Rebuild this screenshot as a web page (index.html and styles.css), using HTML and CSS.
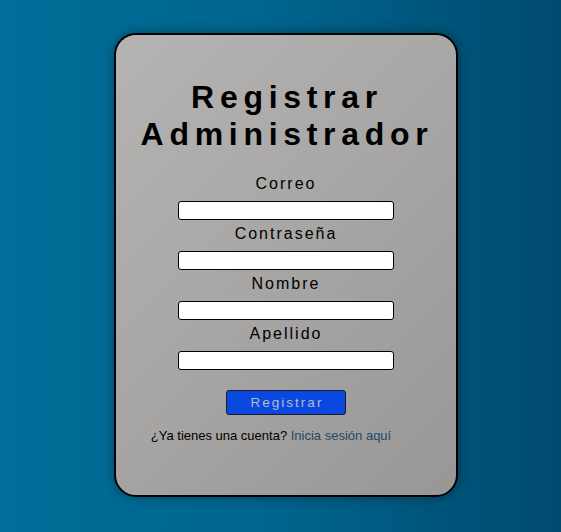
FILE: index.html
```html
<!DOCTYPE html>
<html lang="es">
<head>
<meta charset="utf-8">
<title>Registrar Administrador</title>
<link rel="stylesheet" href="styles.css">
</head>
<body>
<main class="page">
  <section class="card">
    <h1 class="title">Registrar<br>Administrador</h1>
    <form class="form">
      <label class="label" for="correo">Correo</label>
      <input class="input" id="correo" type="email">
      <label class="label" for="pass">Contraseña</label>
      <input class="input" id="pass" type="password">
      <label class="label" for="nombre">Nombre</label>
      <input class="input" id="nombre" type="text">
      <label class="label" for="apellido">Apellido</label>
      <input class="input" id="apellido" type="text">
      <button class="btn" type="button">Registrar</button>
    </form>
    <p class="footer">¿Ya tienes una cuenta? <a class="link" href="#">Inicia sesión aquí</a></p>
  </section>
</main>
</body>
</html>
```
FILE: styles.css
```css
html, body {
  margin: 0;
  padding: 0;
  height: 100%;
}
body {
  background: linear-gradient(90deg, #006f99 0%, #006690 45%, #004a6e 100%);
  font-family: "Liberation Sans", Arial, sans-serif;
}
.page {
  display: flex;
  justify-content: center;
  padding: 33px 0 0 11px;
}
.card {
  box-sizing: border-box;
  width: 344px;
  height: 464px;
  border: 2px solid #000;
  border-radius: 22px;
  background: linear-gradient(135deg, #b5b4b3 0%, #a7a6a5 50%, #989796 100%);
  box-shadow: 0 0 14px rgba(0, 0, 0, 0.35);
  padding-top: 44px;
  display: flex;
  flex-direction: column;
  align-items: center;
}
.title {
  margin: 0 0 22px 2px;
  font-size: 32px;
  line-height: 37px;
  font-weight: bold;
  letter-spacing: 5.7px;
  text-align: center;
  color: #000;
}
.form {
  display: flex;
  flex-direction: column;
  align-items: center;
}
.label {
  display: block;
  font-size: 16px;
  line-height: 18px;
  letter-spacing: 2px;
  color: #000;
  margin-bottom: 8px;
}
.input {
  box-sizing: border-box;
  width: 216px;
  height: 19px;
  border: 1px solid #000;
  border-radius: 3px;
  background: #fff;
  margin: 0 0 5px 0;
  padding: 0 4px;
}
.btn {
  box-sizing: border-box;
  margin-top: 15px;
  width: 120px;
  height: 25px;
  border: 1px solid #1a1a2a;
  border-radius: 3px;
  background: #0a48e0;
  color: #b8bccb;
  font-family: "Liberation Sans", Arial, sans-serif;
  font-size: 13.5px;
  letter-spacing: 2px;
  padding: 0 0 0 2px;
}
.footer {
  margin: 13px 30px 0 0;
  font-size: 13px;
  line-height: 15px;
  color: #000;
}
.link {
  color: #1d4a6c;
  text-decoration: none;
}
```
